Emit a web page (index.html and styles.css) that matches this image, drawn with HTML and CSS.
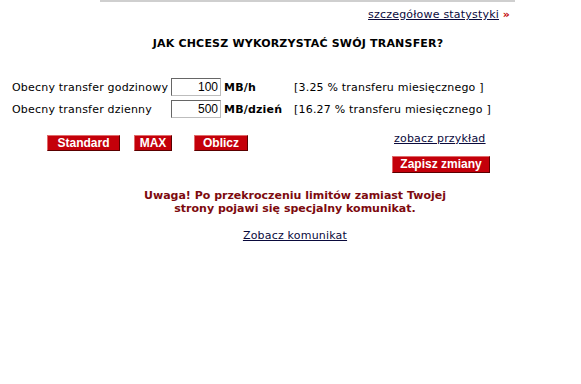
FILE: index.html
```html
<!DOCTYPE html>
<html lang="pl">
<head>
    <meta charset="UTF-8">
    <title>Transfer</title>
    <link rel="stylesheet" href="styles.css">
</head>
<body>
    <div class="top-line"></div>
    <div class="stats-row">
        <a href="#" class="link">szczegółowe statystyki</a> <span class="arrows">»</span>
    </div>
    <div class="center">
        <h1 class="title">JAK CHCESZ WYKORZYSTAĆ SWÓJ TRANSFER?</h1>
    </div>

    <div class="transfer-grid">
        <div class="label">Obecny transfer godzinowy</div>
        <div class="field">100</div>
        <div class="unit">MB/h</div>
        <div class="percent">[3.25 % transferu miesięcznego ]</div>

        <div class="label">Obecny transfer dzienny</div>
        <div class="field">500</div>
        <div class="unit">MB/dzień</div>
        <div class="percent">[16.27 % transferu miesięcznego ]</div>
    </div>

    <div class="actions">
        <div class="btn-group">
            <div class="btn btn-standard">Standard</div>
            <div class="btn btn-max">MAX</div>
            <div class="btn btn-calc">Oblicz</div>
        </div>
        <div class="save-group">
            <a href="#" class="link">zobacz przykład</a>
            <div class="btn btn-save">Zapisz zmiany</div>
        </div>
    </div>

    <div class="center">
        <p class="warning">Uwaga! Po przekroczeniu limitów zamiast Twojej<br>strony pojawi się specjalny komunikat.</p>
        <a href="#" class="link">Zobacz komunikat</a>
    </div>
</body>
</html>
```

FILE: styles.css
```css
* {
    margin: 0;
    padding: 0;
    box-sizing: border-box;
}
body {
    background: #ffffff;
    font-family: "DejaVu Sans", Verdana, sans-serif;
    font-size: 11px;
    letter-spacing: 0.2px;
    color: #000000;
    overflow: hidden;
}
.link {
    color: #0a0a3c;
    text-decoration: underline;
}
.top-line {
    width: 415px;
    margin-left: 100px;
    border-top: 2px solid #cfcfcf;
}
.stats-row {
    text-align: right;
    padding-right: 71px;
    margin-top: 6px;
    line-height: 13px;
}
.arrows {
    color: #c00000;
    font-weight: bold;
}
.center {
    width: 572px;
    margin-left: 9px;
    text-align: center;
}
.title {
    font-size: 11px;
    font-weight: bold;
    margin-top: 16px;
    margin-left: 6px;
    line-height: 13px;
}
.transfer-grid {
    display: grid;
    grid-template-columns: 159px 50px 73px auto;
    grid-auto-rows: 18px;
    row-gap: 4px;
    align-items: center;
    padding-left: 12px;
    margin-top: 28px;
}
.field {
    height: 18px;
    border: 1px solid #666666;
    border-right-color: #bdbdbd;
    border-bottom-color: #bdbdbd;
    text-align: right;
    padding-right: 2px;
    font-family: "Liberation Sans", Arial, sans-serif;
    font-size: 12px;
    letter-spacing: 0;
    line-height: 16px;
}
.unit {
    font-weight: bold;
    padding-left: 3px;
}
.actions {
    display: flex;
    margin-top: 14px;
}
.btn-group {
    display: flex;
    padding-left: 47px;
    width: 392px;
    gap: 14px;
    padding-top: 3px;
}
.btn {
    height: 16px;
    background: #c4000a;
    color: #ffffff;
    font-family: "Liberation Sans", Arial, sans-serif;
    font-weight: bold;
    font-size: 12px;
    letter-spacing: 0;
    line-height: 14px;
    text-align: center;
    border: 1px solid;
    border-color: #e06a6a #5a0000 #5a0000 #e06a6a;
}
.btn-standard {
    width: 73px;
}
.btn-max {
    width: 38px;
}
.btn-calc {
    width: 54px;
    margin-left: 8px;
}
.save-group {
    display: flex;
    flex-direction: column;
    align-items: flex-start;
    gap: 11px;
}
.save-group .link {
    margin-left: 2px;
    line-height: 13px;
}
.btn-save {
    width: 98px;
    height: 17px;
}
.warning {
    color: #7d0a0e;
    font-weight: bold;
    letter-spacing: 0;
    line-height: 13px;
    margin-top: 16px;
    margin-bottom: 14px;
}
```
